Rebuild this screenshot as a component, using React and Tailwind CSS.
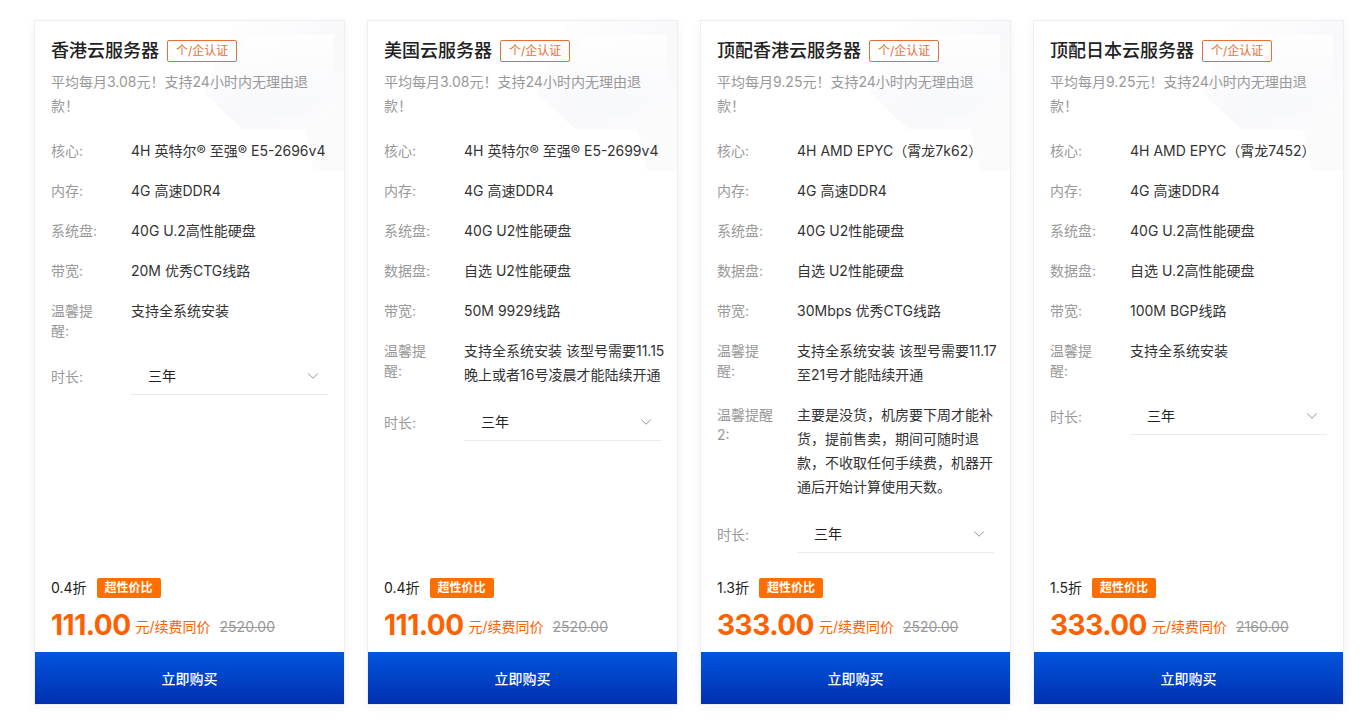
import React from 'react';
import { ChevronDown } from 'lucide-react';

const plans = [
  {
    name: '香港云服务器',
    monthly: '3.08',
    specs: [
      { label: '核心:', value: ['4H 英特尔® 至强® E5-2696v4'] },
      { label: '内存:', value: ['4G 高速DDR4'] },
      { label: '系统盘:', value: ['40G U.2高性能硬盘'] },
      { label: '带宽:', value: ['20M 优秀CTG线路'] },
      { label: '温馨提醒:', value: ['支持全系统安装'] },
    ],
    discount: '0.4折',
    price: '111.00',
    original: '2520.00',
  },
  {
    name: '美国云服务器',
    monthly: '3.08',
    specs: [
      { label: '核心:', value: ['4H 英特尔® 至强® E5-2699v4'] },
      { label: '内存:', value: ['4G 高速DDR4'] },
      { label: '系统盘:', value: ['40G U2性能硬盘'] },
      { label: '数据盘:', value: ['自选 U2性能硬盘'] },
      { label: '带宽:', value: ['50M 9929线路'] },
      { label: '温馨提醒:', value: ['支持全系统安装 该型号需要11.15', '晚上或者16号凌晨才能陆续开通'] },
    ],
    discount: '0.4折',
    price: '111.00',
    original: '2520.00',
  },
  {
    name: '顶配香港云服务器',
    monthly: '9.25',
    specs: [
      { label: '核心:', value: ['4H AMD EPYC（霄龙7k62）'] },
      { label: '内存:', value: ['4G 高速DDR4'] },
      { label: '系统盘:', value: ['40G U2性能硬盘'] },
      { label: '数据盘:', value: ['自选 U2性能硬盘'] },
      { label: '带宽:', value: ['30Mbps 优秀CTG线路'] },
      { label: '温馨提醒:', value: ['支持全系统安装 该型号需要11.17', '至21号才能陆续开通'] },
      {
        label: '温馨提醒2:',
        value: ['主要是没货，机房要下周才能补', '货，提前售卖，期间可随时退', '款，不收取任何手续费，机器开', '通后开始计算使用天数。'],
      },
    ],
    discount: '1.3折',
    price: '333.00',
    original: '2520.00',
  },
  {
    name: '顶配日本云服务器',
    monthly: '9.25',
    specs: [
      { label: '核心:', value: ['4H AMD EPYC（霄龙7452）'] },
      { label: '内存:', value: ['4G 高速DDR4'] },
      { label: '系统盘:', value: ['40G U.2高性能硬盘'] },
      { label: '数据盘:', value: ['自选 U.2高性能硬盘'] },
      { label: '带宽:', value: ['100M BGP线路'] },
      { label: '温馨提醒:', value: ['支持全系统安装'] },
    ],
    discount: '1.5折',
    price: '333.00',
    original: '2160.00',
  },
];

// faint bevelled shapes in the card corner
const CornerDecor = () => (
  <svg className="absolute right-0 top-0" width="180" height="150" viewBox="0 0 180 150" fill="none">
    <defs>
      <linearGradient id="dg1" x1="0" y1="0" x2="1" y2="1">
        <stop offset="0" stopColor="#f4f5f9" stopOpacity="0" />
        <stop offset="0.55" stopColor="#f2f3f7" />
        <stop offset="1" stopColor="#f8f9fb" />
      </linearGradient>
      <linearGradient id="dg2" x1="0" y1="0" x2="0" y2="1">
        <stop offset="0" stopColor="#ffffff" />
        <stop offset="1" stopColor="#f7f8fa" />
      </linearGradient>
    </defs>
    <polygon points="70,0 180,0 180,70 140,108 78,108 40,72" fill="url(#dg1)" opacity="0.55" />
    <polygon points="86,14 170,14 170,64 136,94 88,94 60,66" fill="url(#dg2)" opacity="0.8" />
    <polygon points="140,108 180,70 180,150 150,150" fill="#f7f8fa" opacity="0.5" />
  </svg>
);

const SpecRow = ({ label, value }) => (
  <div className="flex items-start">
    <div className="w-[58px] shrink-0 pt-[2px] text-[14px] leading-[20px] text-[#999]">{label}</div>
    <div className="ml-[22px] w-[198px] shrink-0 text-[14px] leading-[24px] text-[#333]">
      {value.map((line, i) => (
        <div key={i} className="whitespace-nowrap">
          {line}
        </div>
      ))}
    </div>
  </div>
);

const PlanCard = ({ plan }) => (
  <div className="relative flex h-[685px] w-[311px] shrink-0 flex-col overflow-hidden border border-[#eceef4] bg-white shadow-[0_2px_10px_rgba(30,40,80,0.05)]">
    <CornerDecor />
    <div className="relative px-[16px] pt-[15px]">
      <div className="flex items-center">
        <h3 className="text-[18px] font-medium leading-[30px] text-[#222]">{plan.name}</h3>
        <span className="ml-[8px] flex h-[22px] items-center rounded-[2px] border border-[#e4703a] px-[8px] text-[12px] text-[#e4703a]">
          个/企认证
        </span>
      </div>
      <p className="mt-[4px] text-[14px] leading-[24px] text-[#999]">
        平均每月{plan.monthly}元！支持24小时内无理由退
        <br />
        款！
      </p>

      <div className="mt-[21px] flex flex-col gap-[16px]">
        {plan.specs.map((s, i) => (
          <SpecRow key={i} label={s.label} value={s.value} />
        ))}
        <div className="flex items-center">
          <div className="w-[58px] shrink-0 text-[14px] text-[#999]">时长:</div>
          <div className="ml-[22px] flex h-[38px] w-[198px] items-center justify-between border-b border-[#e9ebf0] pl-[17px] pr-[6px]">
            <span className="text-[14px] text-[#222]">三年</span>
            <ChevronDown size={18} strokeWidth={1.2} color="#888" />
          </div>
        </div>
      </div>
    </div>

    <div className="relative mt-auto px-[16px] pb-[8px]">
      <div className="flex items-center">
        <span className="text-[14px] text-[#222]">{plan.discount}</span>
        <span className="ml-[10px] flex h-[20px] items-center rounded-[2px] bg-[#ff6f00] px-[8px] text-[12px] font-bold text-white">
          超性价比
        </span>
      </div>
      <div className="mt-[8px] flex items-center">
        <span className="text-[28px] font-bold leading-[38px] tracking-[-0.5px] text-[#ff6000]">{plan.price}</span>
        <span className="ml-[5px] pt-[2px] text-[14px] text-[#ff6000]">元/续费同价</span>
        <span className="ml-[9px] pt-[2px] text-[14px] text-[#999] line-through">{plan.original}</span>
      </div>
    </div>
    <button className="relative flex h-[52px] w-full items-center justify-center bg-linear-to-b from-[#0454dd] to-[#0230b2] text-[14px] font-medium text-white">
      立即购买
    </button>
  </div>
);

export default function App() {
  return (
    <div
      className="min-h-[725px] bg-white"
      style={{ fontFamily: 'Inter, "Noto Sans CJK SC", "Noto Sans", sans-serif' }}
    >
      <div className="flex gap-[22px] pl-[34px] pt-[20px]">
        {plans.map((p) => (
          <PlanCard key={p.name} plan={p} />
        ))}
      </div>
    </div>
  );
}
